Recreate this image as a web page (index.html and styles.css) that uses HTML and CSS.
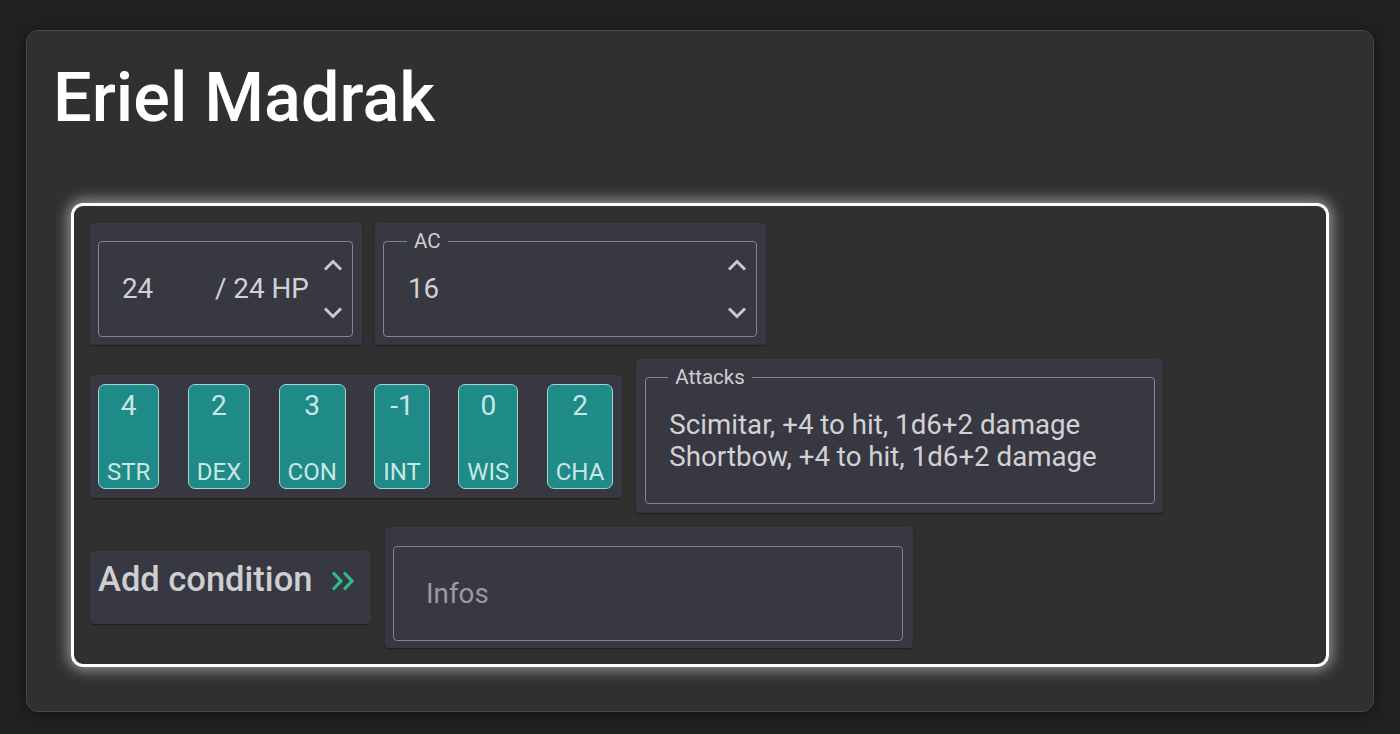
FILE: index.html
```html
<!DOCTYPE html>
<html lang="en">
<head>
<meta charset="utf-8">
<title>Eriel Madrak</title>
<link rel="stylesheet" href="styles.css">
</head>
<body>
<div class="page">
  <section class="sheet">
    <h1 class="title">Eriel Madrak</h1>
    <div class="card">
      <div class="row row-top">
        <div class="paper paper-field">
          <div class="outline hp">
            <span class="value hp-value">24</span>
            <span class="value">/ 24 HP</span>
            <div class="spinner">
              <svg class="chev" viewBox="0 0 20 12" width="20" height="12"><path d="M2 10.5 L10 2.5 L18 10.5"/></svg>
              <svg class="chev" viewBox="0 0 20 12" width="20" height="12"><path d="M2 1.5 L10 9.5 L18 1.5"/></svg>
            </div>
          </div>
        </div>
        <div class="paper paper-field">
          <div class="outline ac">
            <span class="legend legend-ac">AC</span>
            <span class="value">16</span>
            <div class="spinner">
              <svg class="chev" viewBox="0 0 20 12" width="20" height="12"><path d="M2 10.5 L10 2.5 L18 10.5"/></svg>
              <svg class="chev" viewBox="0 0 20 12" width="20" height="12"><path d="M2 1.5 L10 9.5 L18 1.5"/></svg>
            </div>
          </div>
        </div>
      </div>
      <div class="row">
        <div class="paper stats">
          <div class="stat"><span class="stat-val">4</span><span class="stat-lbl">STR</span></div>
          <div class="stat"><span class="stat-val">2</span><span class="stat-lbl">DEX</span></div>
          <div class="stat"><span class="stat-val">3</span><span class="stat-lbl">CON</span></div>
          <div class="stat"><span class="stat-val">-1</span><span class="stat-lbl">INT</span></div>
          <div class="stat"><span class="stat-val">0</span><span class="stat-lbl">WIS</span></div>
          <div class="stat"><span class="stat-val">2</span><span class="stat-lbl">CHA</span></div>
        </div>
        <div class="paper paper-attacks">
          <div class="outline attacks">
            <span class="legend legend-attacks">Attacks</span>
            <div class="attack-text">Scimitar, +4 to hit, 1d6+2 damage<br>Shortbow, +4 to hit, 1d6+2 damage</div>
          </div>
        </div>
      </div>
      <div class="row">
        <div class="paper add">
          <span class="add-text">Add condition</span>
          <svg class="add-icon" viewBox="0 0 24 20" width="24" height="20"><path d="M2 1.5 L10 10 L2 18.5"/><path d="M13 1.5 L21 10 L13 18.5"/></svg>
        </div>
        <div class="paper paper-infos">
          <div class="outline infos">
            <span class="placeholder">Infos</span>
          </div>
        </div>
      </div>
    </div>
  </section>
</div>
</body>
</html>
```
FILE: styles.css
```css
* { box-sizing: border-box; }
html, body { margin: 0; padding: 0; }
body {
  background: #212121;
  font-family: Roboto, "Liberation Sans", sans-serif;
  color: #d2d2d6;
  width: 1400px;
  height: 734px;
  overflow: hidden;
}
.page {
  padding: 30px 26px 22px 26px;
}
.sheet {
  background: #303030;
  border: 1px solid #484848;
  border-radius: 12px;
  box-shadow: 0 2px 14px rgba(0, 0, 0, 0.45);
  padding: 27px 22px 44px 22px;
}
.title {
  margin: 0;
  padding-left: 4px;
  font-size: 68.4px;
  line-height: 80px;
  font-weight: 500;
  color: #ffffff;
}
.card {
  margin: 65px 22px 0 22px;
  border: 3px solid #ffffff;
  border-radius: 12px;
  box-shadow: 0 0 14px 3px rgba(255, 255, 255, 0.5);
  padding: 17px 16px 16px 16px;
  display: flex;
  flex-direction: column;
  gap: 14px;
}
.row {
  display: flex;
  align-items: center;
  gap: 14px;
}
.row-top { gap: 13px; }
.paper {
  background: #383842;
  border-radius: 4px;
  box-shadow: 0 2px 1px -1px rgba(0,0,0,0.2), 0 1px 1px 0 rgba(0,0,0,0.14), 0 1px 3px 0 rgba(0,0,0,0.12);
}
.paper-field {
  padding: 18px 9px 8px 8px;
}
.outline {
  position: relative;
  border: 1px solid #858589;
  border-radius: 4px;
}
.hp, .ac {
  height: 96px;
  display: flex;
  align-items: center;
  padding-left: 23px;
}
.hp { width: 255px; }
.ac { width: 374px; padding-left: 24px; }
.value {
  font-size: 27.8px;
  line-height: 32px;
  color: #d2d2d6;
}
.hp-value { width: 93px; }
.spinner {
  margin-left: auto;
  margin-right: 9px;
  display: flex;
  flex-direction: column;
  gap: 36px;
}
.chev { display: block; }
.chev path {
  fill: none;
  stroke: #cacaca;
  stroke-width: 3;
}
.legend {
  position: absolute;
  top: -11px;
  background: #383842;
  font-size: 20.5px;
  line-height: 20px;
  padding: 0 7px;
  color: #cfcfd2;
}
.legend-ac { left: 23px; }
.legend-attacks { left: 22px; padding: 0 7px; }

.stats {
  padding: 9px 9px 9px 8px;
  display: flex;
  gap: 28.4px;
}
.stat {
  height: 105px;
  background: #1e8b89;
  border: 1px solid #a3d6cf;
  border-radius: 7px;
  padding: 7px 8px 4px 8px;
  display: flex;
  flex-direction: column;
  align-items: center;
  justify-content: space-between;
  color: #c9e7e2;
}
.stat-val {
  font-size: 28px;
  line-height: 28px;
}
.stat-lbl {
  font-size: 24px;
  line-height: 24px;
}

.paper-attacks {
  padding: 18px 8px 9px 9px;
}
.attacks {
  width: 510px;
  height: 127px;
  padding: 31px 20px 0 23px;
}
.attack-text {
  font-size: 27.7px;
  line-height: 32px;
  color: #d2d2d6;
  white-space: nowrap;
}

.add {
  width: 281px;
  height: 73px;
  padding: 8px 16px 0 8px;
  display: flex;
  align-items: flex-start;
}
.add-text {
  font-size: 34.5px;
  line-height: 40px;
  font-weight: 500;
  color: #cfcfd1;
  white-space: nowrap;
}
.add-icon {
  margin-left: auto;
  margin-top: 12px;
}
.add-icon path {
  fill: none;
  stroke: #2ebd85;
  stroke-width: 3.2;
}
.paper-infos {
  padding: 19px 10px 7px 8px;
}
.infos {
  width: 510px;
  height: 95px;
  display: flex;
  align-items: center;
  padding-left: 32px;
  padding-top: 1px;
}
.placeholder {
  font-size: 27.8px;
  line-height: 32px;
  color: #9a9aa0;
}
```
